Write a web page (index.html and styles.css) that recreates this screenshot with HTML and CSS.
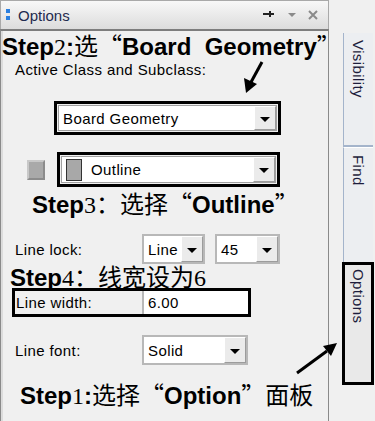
FILE: index.html
```html
<!DOCTYPE html>
<html lang="zh-CN">
<head>
    <meta charset="UTF-8">
    <meta name="viewport" content="width=device-width, initial-scale=1.0">
    <title>Options</title>
    <link rel="stylesheet" href="styles.css">
</head>
<body>

    <div class="window">
        <div class="panel">
            <div class="titlebar">
                <span class="grip"></span>
                <span class="title-text">Options</span>
                <span class="title-icons">
                    <svg width="14" height="10" viewBox="0 0 14 10"><path d="M1 4h10M8 1v6M8 4h4" stroke="#222" stroke-width="2" fill="none"/></svg>
                    <svg width="8" height="6" viewBox="0 0 8 6"><path d="M0 1h8L4 5z" fill="#8a8a8a"/></svg>
                    <svg width="10" height="10" viewBox="0 0 10 10"><path d="M1 1l8 8M9 1l-8 8" stroke="#8a8a8a" stroke-width="2"/></svg>
                </span>
            </div>

            <div class="content">
                <div class="step step2">Step<span class="num">2</span>:<span class="cn">选“</span>Board&nbsp;&nbsp;Geometry<span class="cn">”</span></div>
                <div class="label">Active Class and Subclass:</div>

                <div class="hl hl-class">
                    <div class="combo">
                        <span class="combo-text">Board Geometry</span>
                        <span class="combo-btn"></span>
                    </div>
                </div>

                <div class="sub-row">
                    <span class="check"></span>
                    <div class="hl hl-sub">
                        <div class="combo">
                            <span class="combo-text"><span class="swatch"></span>Outline</span>
                            <span class="combo-btn"></span>
                        </div>
                    </div>
                </div>

                <div class="step step3">Step<span class="num">3</span><span class="cn">：选择“</span>Outline<span class="cn">”</span></div>

                <div class="field-row lock-row">
                    <span class="field-label">Line lock:</span>
                    <div class="combo combo-line">
                        <span class="combo-text">Line</span>
                        <span class="combo-btn"></span>
                    </div>
                    <div class="combo combo-angle">
                        <span class="combo-text">45</span>
                        <span class="combo-btn"></span>
                    </div>
                </div>

                <div class="step step4">Step<span class="num">4</span><span class="cn">：线宽设为</span><span class="num">6</span></div>

                <div class="hl hl-width">
                    <span class="field-label">Line width:</span>
                    <span class="input">6.00</span>
                </div>

                <div class="field-row font-row">
                    <span class="field-label">Line font:</span>
                    <div class="combo combo-font">
                        <span class="combo-text">Solid</span>
                        <span class="combo-btn"></span>
                    </div>
                </div>

                <div class="step step1">Step<span class="num">1</span>:<span class="cn">选择“</span>Option<span class="cn">”面板</span></div>
            </div>
        </div>

        <div class="tabs">
            <div class="tab tab-vis">Visibility</div>
            <div class="tab tab-find">Find</div>
            <div class="tab tab-opt">Options</div>
        </div>

        <svg class="arrows" width="375" height="421" viewBox="0 0 375 421">
            <line x1="262" y1="62" x2="250" y2="84" stroke="#000" stroke-width="3"/>
            <path d="M246 93l-2-15 13 6z" fill="#000"/>
            <line x1="297" y1="373" x2="327" y2="351" stroke="#000" stroke-width="3"/>
            <path d="M337 343l-14 3 8 10z" fill="#000"/>
        </svg>
    </div>

</body>
</html>
```

FILE: styles.css
```css
*{ box-sizing: border-box; }
html, body{ margin: 0; padding: 0; background-color: #f0f0f0; }
body{
    font-family: "Liberation Sans", Arial, sans-serif;
    color: #000;
}
.window{
    position: relative;
    display: flex;
    width: 375px;
    height: 421px;
    overflow: hidden;
}
.panel{
    width: 329px;
    display: flex;
    flex-direction: column;
}
.titlebar{
    height: 29px;
    display: flex;
    align-items: center;
    padding-left: 5px;
    border: 1px solid #a9a9a9;
    border-bottom: 0;
    background: linear-gradient(#f8f8f8, #dcdcdc);
}
.grip{
    width: 4px;
    height: 12px;
    background: linear-gradient(#2a7fe0 0 4px, transparent 4px 7px, #2a7fe0 7px 11px, transparent 11px);
}
.title-text{
    margin-left: 8px;
    font-size: 15px;
    color: #1f2b4f;
}
.title-icons{
    margin-left: auto;
    margin-right: 10px;
    display: flex;
    align-items: center;
    gap: 12px;
}
.content{
    flex: 1;
    border-top: 2px solid #7d7d7d;
    border-left: 1px solid #8a8a8a;
    border-right: 1px solid #8a8a8a;
    box-shadow: inset 2px 0 0 #dcdcdc;
    padding-left: 2px;
}

/* annotation text */
.step{
    position: relative;
    z-index: 1;
    white-space: nowrap;
    font-weight: bold;
    font-size: 24px;
    line-height: 26px;
    height: 26px;
}
.step .cn{
    font-family: "Noto Sans CJK SC", sans-serif;
    font-weight: normal;
}
.step .num{
    font-family: "Liberation Serif", serif;
    font-weight: normal;
}
.step2{ margin-top: 1px; margin-left: -1px; }
.step3{ margin-top: 3px; margin-left: 29px; }
.step4{ margin-top: 0; margin-left: 7px; height: 24px; line-height: 24px; }
.step1{ margin-top: 16px; margin-left: 17px; }

.label, .field-label, .combo-text, .input{
    font-size: 15px;
    letter-spacing: 0.4px;
}
.label{
    margin-top: 4px;
    margin-left: 12px;
    line-height: 16px;
}

/* black highlight frames */
.hl{
    border: 3px solid #000;
}
.hl-class{
    margin-top: 23px;
    margin-left: 51px;
    width: 227px;
    height: 34px;
    padding: 1px;
}
.sub-row{
    margin-top: 17px;
    display: flex;
    align-items: center;
    height: 35px;
}
.check{
    margin-left: 24px;
    width: 18px;
    height: 20px;
    background: #a9a9a9;
    border: 2px solid #c8c8c8;
    border-right-color: #8c8c8c;
    border-bottom-color: #8c8c8c;
}
.hl-sub{
    margin-left: 12px;
    width: 223px;
    height: 35px;
    padding: 1px;
}
.swatch{
    width: 16px;
    height: 22px;
    margin-right: 9px;
    background: #a8a8a8;
    border: 1px solid #333;
}

/* combo boxes */
.combo{
    display: flex;
    height: 100%;
    background: #fff;
    border: 1px solid #a0a0a0;
}
.combo-text{
    flex: 1;
    display: flex;
    align-items: center;
    padding-left: 4px;
}
.combo-btn{
    width: 22px;
    display: flex;
    align-items: center;
    justify-content: center;
    background: #ebebeb;
    border: 1px solid #fff;
    border-right-color: #9c9c9c;
    border-bottom-color: #9c9c9c;
}
.combo-btn::after{
    content: "";
    margin-top: 2px;
    border-left: 5px solid transparent;
    border-right: 5px solid transparent;
    border-top: 5px solid #000;
}

.field-row{
    display: flex;
    align-items: center;
    height: 30px;
}
.field-label{
    width: 139px;
    padding-left: 12px;
}
.field-row .combo{
    border: 2px solid #b8b8b8;
}
.lock-row{ margin-top: 18px; }
.combo-line{ width: 63px; }
.combo-angle{ width: 65px; margin-left: 10px; }
.font-row{ margin-top: 18px; }
.combo-font{ width: 106px; }

.hl-width{
    margin-left: 9px;
    width: 239px;
    height: 29px;
    display: flex;
    align-items: stretch;
}
.hl-width .field-label{
    width: 127px;
    padding-left: 1px;
    display: flex;
    align-items: center;
}
.input{
    flex: 1;
    display: flex;
    align-items: center;
    padding-left: 4px;
    background: #fff;
    border-left: 2px solid #b8b8b8;
}

/* side tabs */
.tabs{
    width: 46px;
    padding-top: 33px;
    padding-left: 14px;
    display: flex;
    flex-direction: column;
}
.tab{
    width: 30px;
    writing-mode: vertical-rl;
    font-size: 15px;
    letter-spacing: 0.4px;
    color: #1d1d3c;
    padding-top: 7px;
    padding-right: 6px;
    background: #eceef1;
    border-left: 1px solid #a4b4cb;
}
.tab-vis{
    height: 114px;
    border-bottom: 2px solid #a4b4cb;
}
.tab-find{
    height: 115px;
    border-top: 1px solid #fff;
}
.tab-opt{
    margin-left: -1px;
    width: 32px;
    height: 123px;
    border: 3px solid #000;
    background: #e9e9e9;
    padding-top: 4px;
    padding-right: 4px;
}

.arrows{
    position: absolute;
    left: 0;
    top: 0;
    pointer-events: none;
}
```
